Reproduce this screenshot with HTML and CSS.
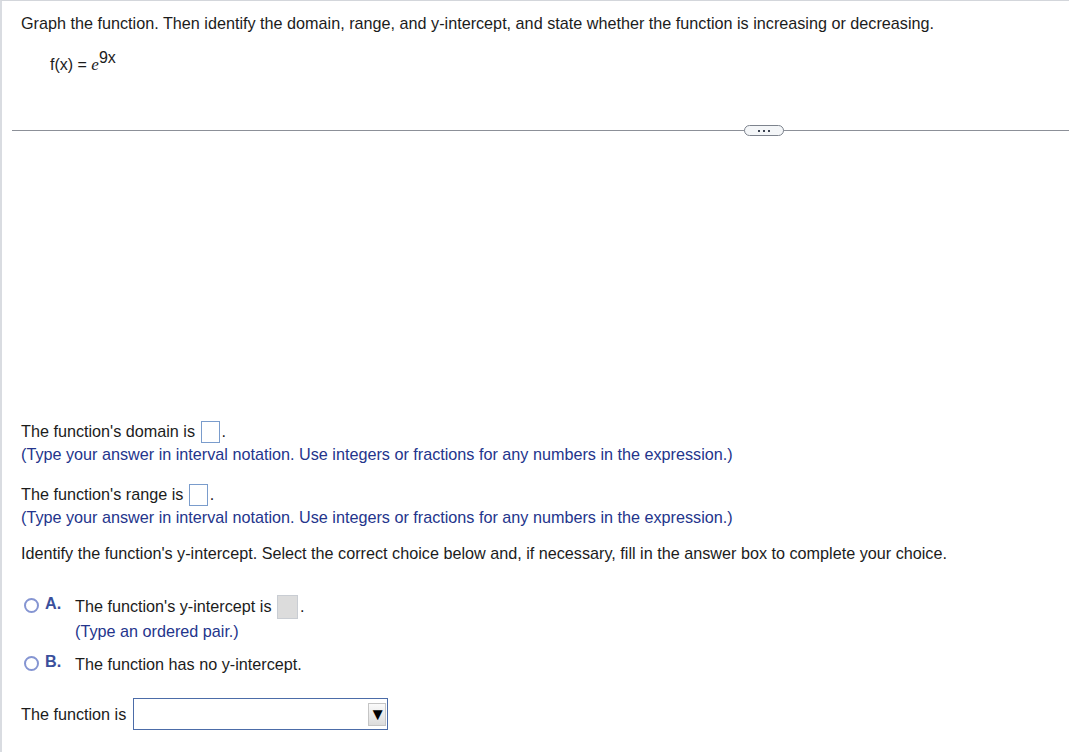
FILE: index.html
```html
<!DOCTYPE html>
<html>
<head>
<meta charset="utf-8">
<link rel="stylesheet" href="styles.css">
</head>
<body>
<div class="page">
  <div class="question">
    <p class="prompt">Graph the function. Then identify the domain, range, and y-intercept, and state whether the function is increasing or decreasing.</p>
    <p class="formula">f(x) = <span class="e">e</span><sup>9x</sup></p>
  </div>
  <div class="divider"><span class="more"><i></i><i></i><i></i></span></div>
  <div class="graph-area"></div>
  <div class="answers">
    <p class="line">The function's domain is <span class="box"></span>.</p>
    <p class="hint">(Type your answer in interval notation. Use integers or fractions for any numbers in the expression.)</p>
    <p class="line gap">The function's range is <span class="box"></span>.</p>
    <p class="hint">(Type your answer in interval notation. Use integers or fractions for any numbers in the expression.)</p>
    <p class="line identify">Identify the function's y-intercept. Select the correct choice below and, if necessary, fill in the answer box to complete your choice.</p>
    <div class="choices">
      <div class="choice">
        <span class="radio"></span><span class="letter">A.</span>
        <div class="choice-text">
          <p class="line">The function's y-intercept is <span class="box filled"></span>.</p>
          <p class="hint sub">(Type an ordered pair.)</p>
        </div>
      </div>
      <div class="choice b">
        <span class="radio"></span><span class="letter">B.</span>
        <div class="choice-text">
          <p class="line">The function has no y-intercept.</p>
        </div>
      </div>
    </div>
    <div class="select-row">
      <span>The function is</span>
      <span class="select"><span class="arrow">&#9660;</span></span>
    </div>
  </div>
</div>
</body>
</html>
```
FILE: styles.css
```css
html, body {
  margin: 0;
  padding: 0;
  background: #fff;
}
body {
  font-family: "Liberation Sans", Arial, sans-serif;
  font-size: 16.2px;
  color: #1c1c1c;
}
p { margin: 0; }
.page {
  width: 1069px;
  height: 752px;
  border-left: 2px solid #d9dce1;
  border-top: 1px solid #d3d6db;
  box-sizing: border-box;
  overflow: hidden;
}
.question {
  padding-left: 19px;
}
.prompt {
  line-height: 18px;
  padding-top: 13px;
}
.formula {
  padding-left: 29px;
  margin-top: 24px;
  font-size: 16px;
  line-height: 18px;
}
.formula .e {
  font-family: "Liberation Serif", "Times New Roman", serif;
  font-style: italic;
  font-size: 17px;
}
.formula sup {
  font-size: 16px;
  vertical-align: 7px;
  line-height: 0;
}
.divider {
  margin-top: 56px;
  margin-left: 10px;
  height: 1px;
  background: #8c9098;
  position: relative;
}
.more {
  position: absolute;
  left: 732px;
  top: -5px;
  width: 38px;
  height: 9px;
  border: 1px solid #7d838d;
  border-radius: 6px;
  background: #f4f6f8;
  display: flex;
  align-items: center;
  justify-content: center;
  gap: 3px;
}
.more i {
  width: 2px;
  height: 2px;
  background: #3d4452;
  display: block;
}
.graph-area {
  height: 289px;
}
.answers {
  padding-left: 19px;
}
.line {
  line-height: 23px;
  display: flex;
  align-items: center;
  white-space: pre;
}
.box {
  display: inline-block;
  width: 17px;
  height: 20px;
  border: 1px solid #7a9ccc;
  margin-left: 1px;
  margin-right: 2px;
  box-sizing: content-box;
}
.box.filled {
  background: #dcdcdc;
  border-color: #c9cdd3;
  width: 19px;
  height: 22px;
}
.hint {
  color: #24358c;
  line-height: 18px;
  margin-top: 2px;
}
.gap {
  margin-top: 20px;
}
.identify {
  margin-top: 18px;
  line-height: 18px;
}
.choices {
  margin-top: 32px;
}
.choice {
  display: flex;
  align-items: flex-start;
}
.radio {
  width: 15px;
  height: 15px;
  border: 2px solid #8595d2;
  border-radius: 50%;
  box-sizing: border-box;
  margin-left: 3px;
  margin-top: 4px;
  flex: none;
}
.letter {
  color: #3a4f9c;
  font-weight: bold;
  margin-left: 6px;
  width: 30px;
  line-height: 23px;
  margin-top: -2px;
}
.choice-text .line {
  line-height: 25px;
}
.hint.sub {
  margin-top: 2px;
  line-height: 20px;
}
.choice.b {
  margin-top: 11px;
}
.select-row {
  margin-top: 21px;
  display: flex;
  align-items: center;
  gap: 7px;
}
.select {
  width: 255px;
  height: 32px;
  border: 1px solid #4c6ca8;
  box-sizing: border-box;
  position: relative;
  display: block;
}
.arrow {
  position: absolute;
  right: 1px;
  top: 4px;
  width: 18px;
  height: 23px;
  background: linear-gradient(#fafafa, #dcdcdc);
  border: 1px solid #c5c5c5;
  font-size: 17px;
  line-height: 22px;
  text-align: center;
  color: #000;
  box-sizing: border-box;
}
```
